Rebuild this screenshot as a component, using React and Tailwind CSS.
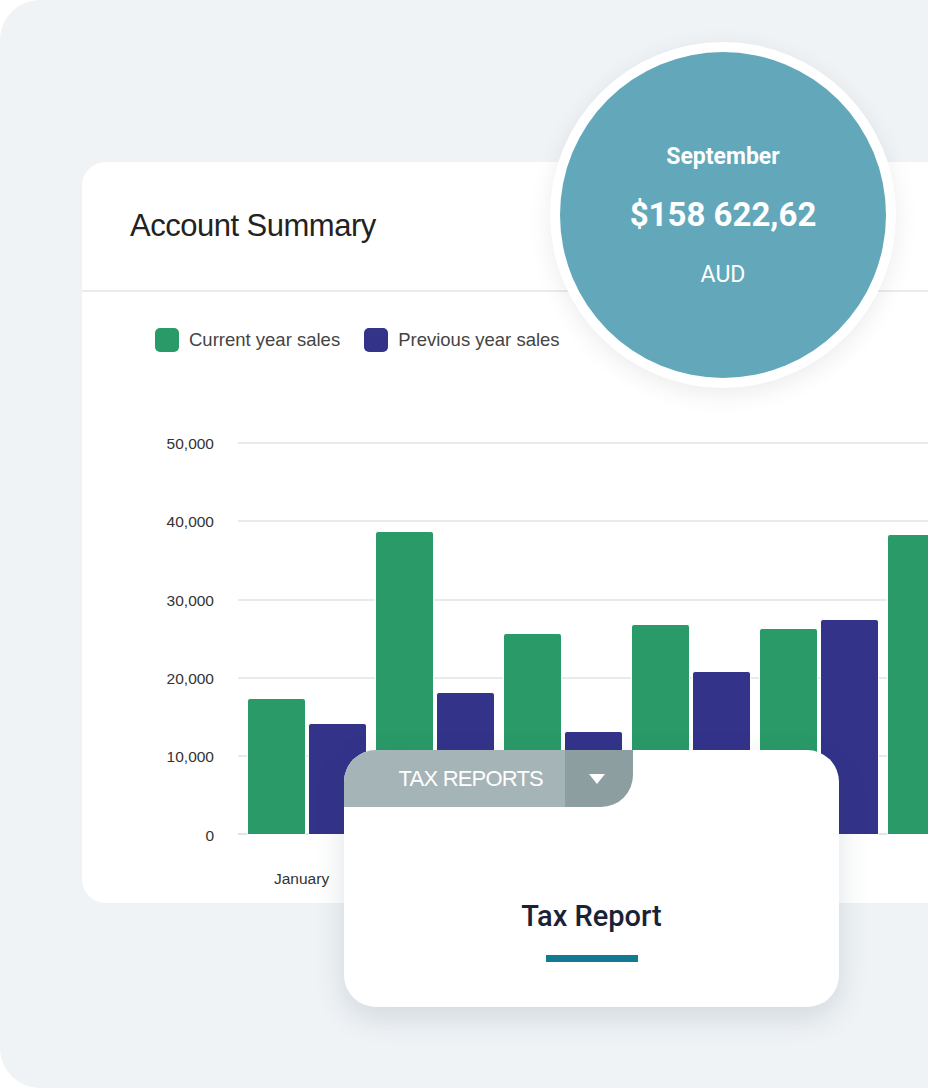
export default function App() {
  const groups = [
    [17.5, 14.2], [38.8, 18.2], [25.7, 13.2], [26.9, 20.9], [26.4, 27.5], [38.4, 0],
  ];
  const px = (v) => v * 7.84;
  const ticks = ["50,000", "40,000", "30,000", "20,000", "10,000", "0"];
  return (
    <div className="w-[928px] h-[1088px] bg-white" style={{ fontFamily: "'Liberation Sans', Arial, sans-serif" }}>
      <div className="relative w-[968px] h-[1088px] rounded-[40px] bg-[#eff3f6] overflow-hidden pt-[162px] pl-[82px]">
        <div className="w-[900px] h-[741px] bg-white rounded-[24px]">
          <div className="h-[130px] border-b-2 border-[#e8ecef] flex items-center pl-[48px]">
            <span className="text-[31px] text-[#222] tracking-[-0.5px]">Account Summary</span>
          </div>
          <div className="flex items-center gap-[10px] pl-[73px] pt-[34px] text-[18.5px] text-[#444]">
            <span className="w-[24px] h-[24px] rounded-[5px] bg-[#2a9a68]"></span>
            <span>Current year sales</span>
            <span className="w-[24px] h-[24px] rounded-[5px] bg-[#33338a] ml-[14px]"></span>
            <span>Previous year sales</span>
          </div>
          <div className="relative h-[392px] mt-[89px]">
            {ticks.map((t, i) => (
              <div key={t} className="absolute left-0 w-[132px] text-right text-[15.5px] text-[#333] leading-[18px]" style={{ top: i * 78.4 - 8 }}>{t}</div>
            ))}
            <div className="absolute left-[156px] right-0 top-0 bottom-0">
              {[0, 1, 2, 3, 4].map((i) => (
                <div key={i} className="absolute left-0 right-0 h-[2px] bg-[#e8ebee]" style={{ top: i * 78.4 - 1 }}></div>
              ))}
              <div className="absolute left-0 right-0 bottom-0 h-[2px] bg-[#e1e4e7]"></div>
              <div className="relative flex items-end h-full pl-[9px] gap-[8px]">
                {groups.map((g, i) => (
                  <div key={i} className="flex items-end gap-[2px]">
                    <div className="w-[59px] bg-[#2a9a68] rounded-t-[3px] border border-white" style={{ height: px(g[0]) }}></div>
                    {g[1] > 0 && <div className="w-[59px] bg-[#33338a] rounded-t-[3px] border border-white" style={{ height: px(g[1]) }}></div>}
                  </div>
                ))}
              </div>
              <div className="absolute left-[36px] top-[424px] text-[15.5px] text-[#333]">January</div>
            </div>
          </div>
        </div>

        <div className="absolute left-[550px] top-[42px] w-[346px] h-[346px] rounded-full bg-white shadow-[0_6px_24px_rgba(0,0,0,0.08)] flex items-center justify-center">
          <div className="w-[326px] h-[326px] rounded-full bg-[#62a8ba] flex flex-col items-center justify-center text-white" style={{ fontFamily: "Roboto, sans-serif" }}>
            <div className="text-[23px] font-bold mt-[2px]">September</div>
            <div className="text-[33px] font-bold mt-[16px]">$158 622,62</div>
            <div className="text-[23px] mt-[18px]">AUD</div>
          </div>
        </div>

        <div className="absolute left-[344px] top-[750px] w-[495px] h-[257px] bg-white rounded-[32px] shadow-[0_10px_30px_rgba(40,60,80,0.15)] overflow-hidden">
          <div className="flex h-[57px] w-[289px] rounded-br-[32px] overflow-hidden">
            <div className="w-[221px] bg-[#a5b4b7] flex items-center justify-end pr-[22px] text-white text-[22px] tracking-[-0.8px]">TAX REPORTS</div>
            <div className="flex-1 bg-[#8d9ea1] flex items-center justify-center pr-[4px]">
              <svg width="18" height="12" viewBox="0 0 18 12"><path d="M1 1h16L9 11z" fill="white" /></svg>
            </div>
          </div>
          <div className="flex flex-col items-center mt-[92px]">
            <div className="text-[29px] font-medium text-[#1a2236] leading-[34px]" style={{ fontFamily: "Roboto, sans-serif" }}>Tax Report</div>
            <div className="w-[92px] h-[7px] bg-[#137a94] mt-[22px]"></div>
          </div>
        </div>
      </div>
    </div>
  );
}
